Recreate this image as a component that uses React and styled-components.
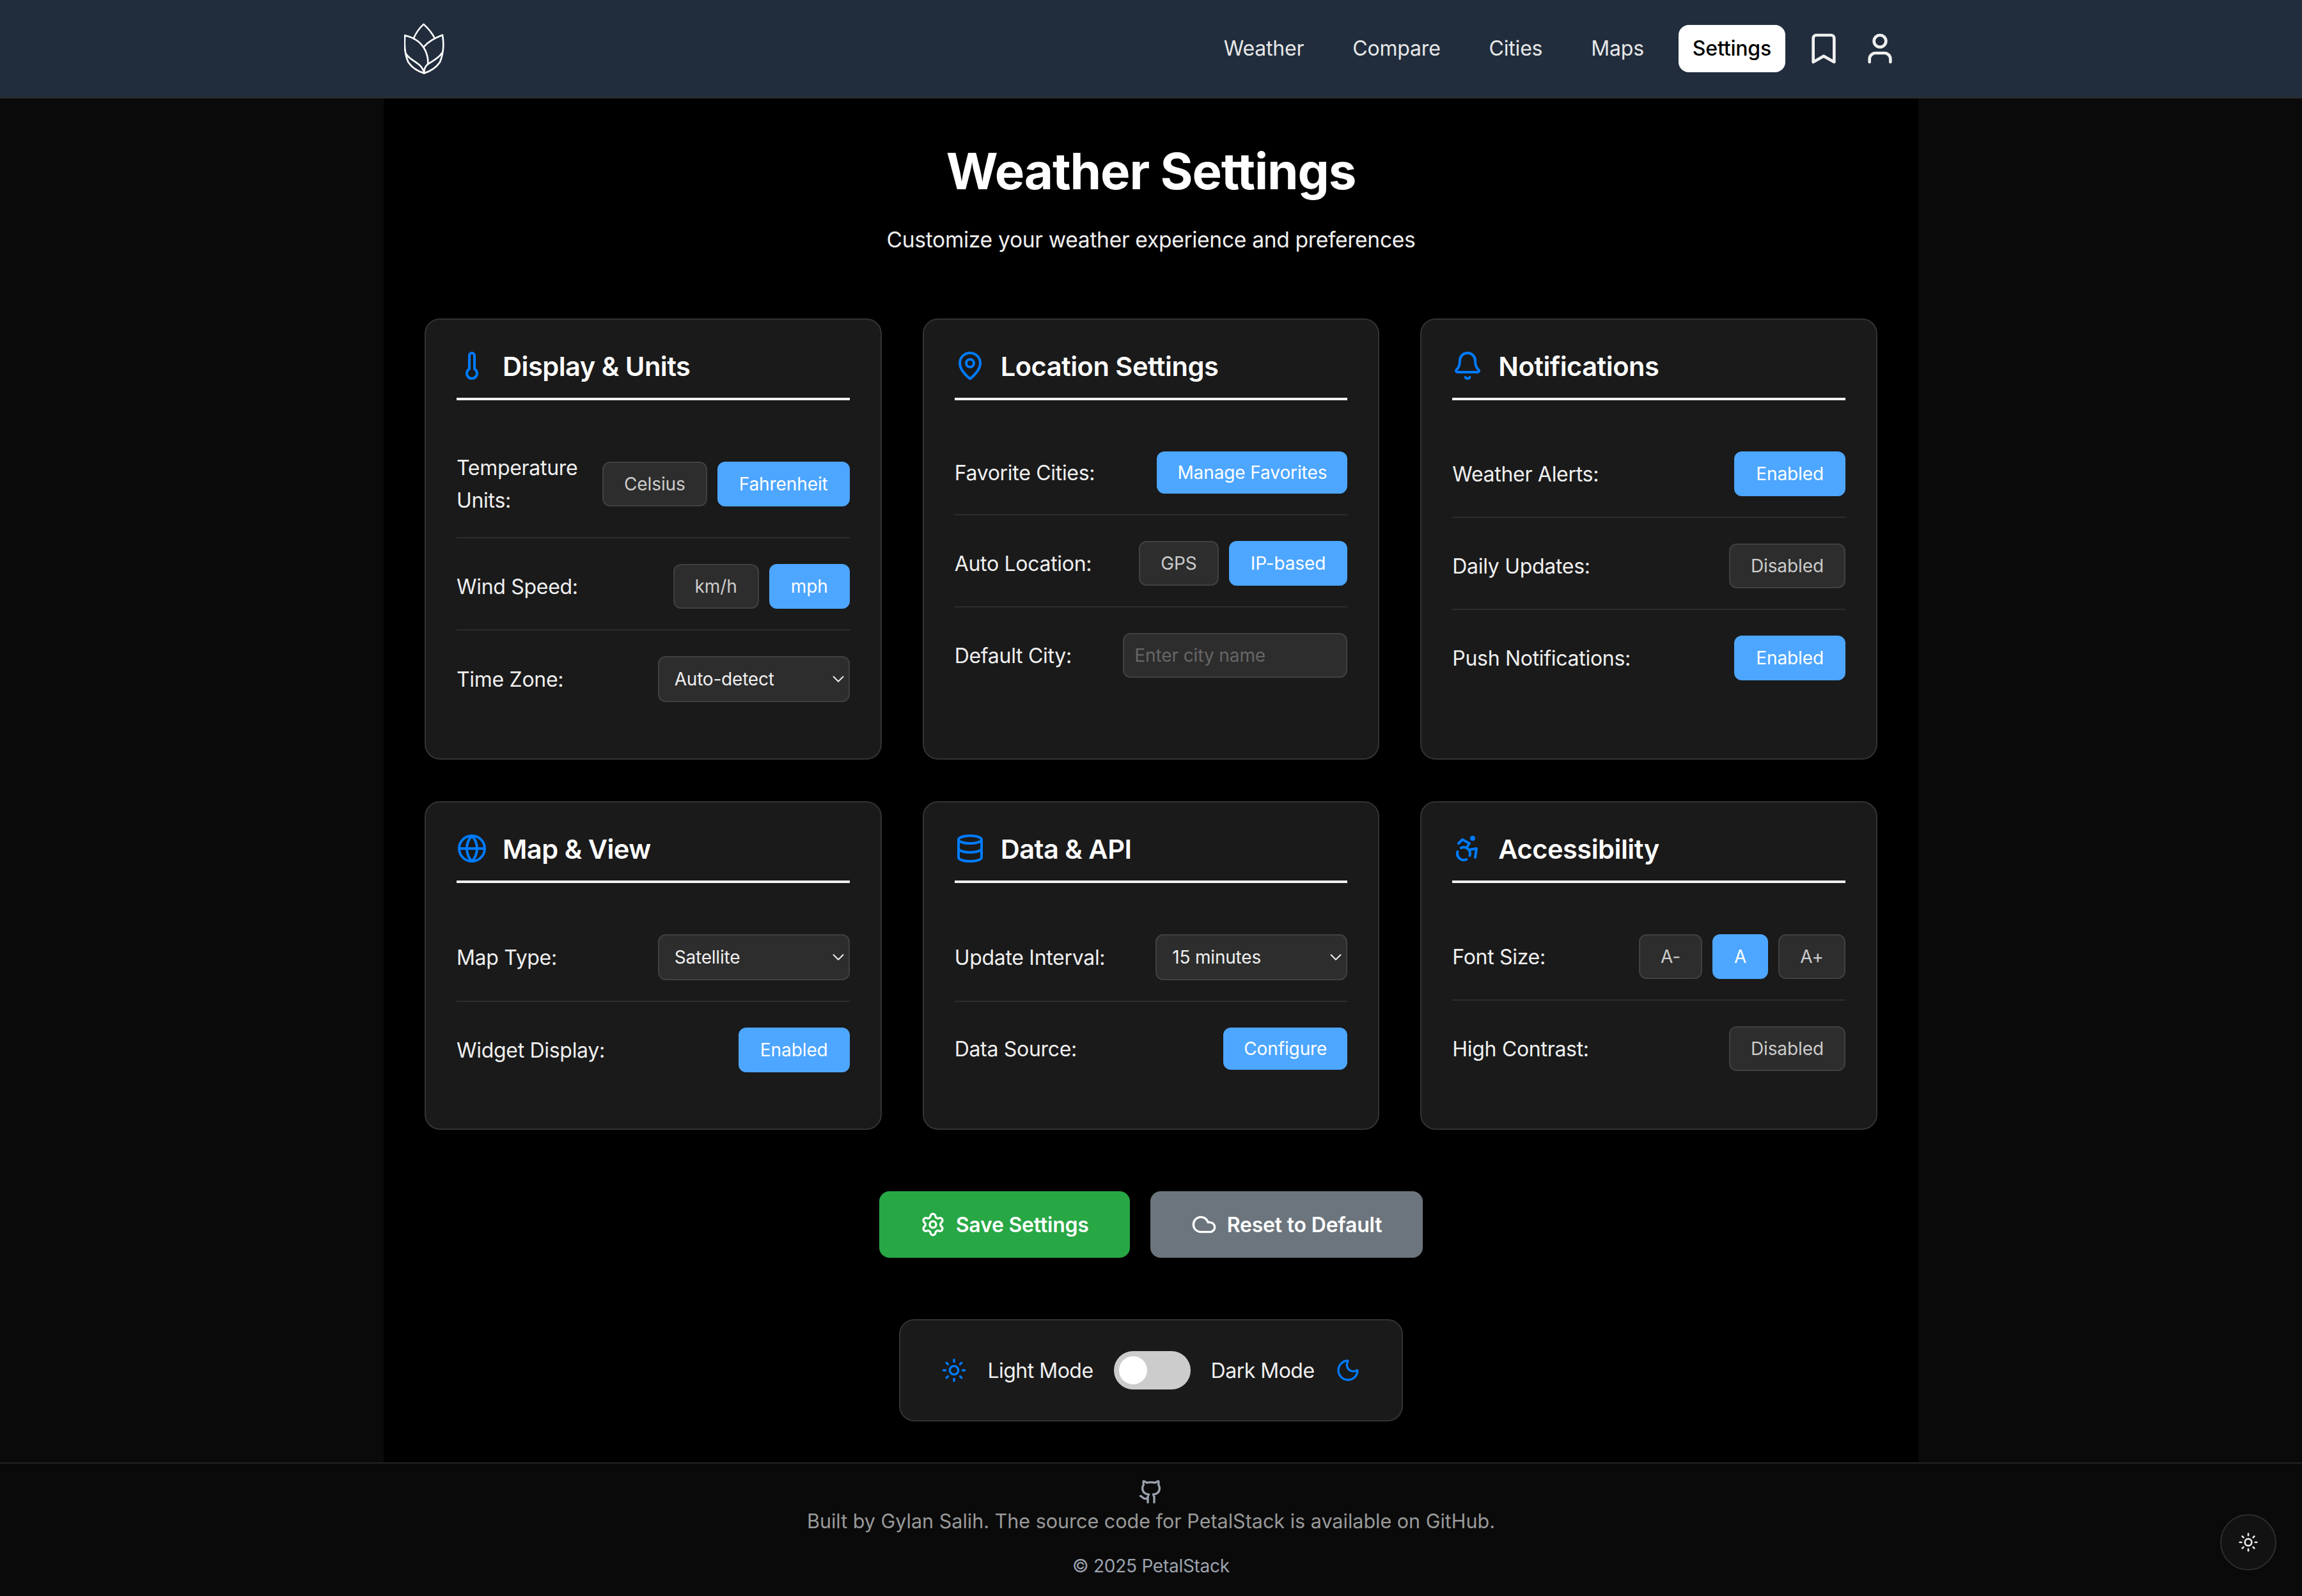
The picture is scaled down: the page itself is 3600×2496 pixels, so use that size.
import styled, { createGlobalStyle } from "styled-components";
import {
  Accessibility,
  Bell,
  Bookmark,
  ChevronDown,
  Cloud,
  Database,
  Github,
  Globe,
  MapPin,
  Moon,
  Settings,
  Sun,
  Thermometer,
  User,
} from "lucide-react";

const navLinks = ["Weather", "Compare", "Cities", "Maps", "Settings"];

function SelectField({ value, options }) {
  return (
    <SelectWrap>
      <Select defaultValue={value}>
        {options.map((option) => (
          <option key={option}>{option}</option>
        ))}
      </Select>
      <SelectArrow>
        <ChevronDown size={30} strokeWidth={1.5} />
      </SelectArrow>
    </SelectWrap>
  );
}

function Card({ icon: Icon, title, children }) {
  return (
    <CardBox>
      <CardHeader>
        <Icon size={48} strokeWidth={2} color="#007bff" />
        <CardTitle>{title}</CardTitle>
      </CardHeader>
      {children}
    </CardBox>
  );
}

function Logo() {
  return (
    <svg width="63" height="80" viewBox="96 107 190 240" fill="none" stroke="#fff" strokeWidth="8" strokeLinejoin="round" strokeLinecap="round">
      <path d="M140 180C152 152 168 130 188 112C210 132 228 154 240 178" />
      <path d="M100 165C145 175 178 198 196 236C206 258 210 280 208 300" />
      <path d="M100 165C97 200 97 250 115 290C135 320 165 335 190 343" />
      <path d="M104 250C120 285 182 292 190 343" />
      <path d="M190 218C212 192 245 175 277 163C285 210 282 250 265 290C245 320 215 335 190 343" />
      <path d="M190 343C190 325 195 310 208 300C232 286 262 270 274 248" />
    </svg>
  );
}

export default function App() {
  return (
    <>
      <GlobalStyle />
      <Nav>
        <NavInner>
          <Logo />
          <NavRight>
            {navLinks.map((link) => (
              <NavLink key={link} $active={link === "Settings"}>
                {link}
              </NavLink>
            ))}
            <Bookmark size={56} strokeWidth={2} color="#f0f0f0" />
            <User size={56} strokeWidth={2} color="#f0f0f0" />
          </NavRight>
        </NavInner>
      </Nav>

      <Main>
        <Title>Weather Settings</Title>
        <Subtitle>Customize your weather experience and preferences</Subtitle>

        <CardGrid>
          <Card icon={Thermometer} title="Display & Units">
            <Row>
              <Label>Temperature Units:</Label>
              <ButtonGroup>
                <OptionButton>Celsius</OptionButton>
                <OptionButton $variant="on">Fahrenheit</OptionButton>
              </ButtonGroup>
            </Row>
            <Row>
              <Label>Wind Speed:</Label>
              <ButtonGroup>
                <OptionButton>km/h</OptionButton>
                <OptionButton $variant="on">mph</OptionButton>
              </ButtonGroup>
            </Row>
            <Row>
              <Label>Time Zone:</Label>
              <SelectField value="Auto-detect" options={["Auto-detect", "UTC", "Local"]} />
            </Row>
          </Card>

          <Card icon={MapPin} title="Location Settings">
            <Row>
              <Label>Favorite Cities:</Label>
              <OptionButton $variant="action">Manage Favorites</OptionButton>
            </Row>
            <Row>
              <Label>Auto Location:</Label>
              <ButtonGroup>
                <OptionButton>GPS</OptionButton>
                <OptionButton $variant="on">IP-based</OptionButton>
              </ButtonGroup>
            </Row>
            <Row>
              <Label>Default City:</Label>
              <CityInput placeholder="Enter city name" />
            </Row>
          </Card>

          <Card icon={Bell} title="Notifications">
            <Row>
              <Label>Weather Alerts:</Label>
              <OptionButton $variant="on">Enabled</OptionButton>
            </Row>
            <Row>
              <Label>Daily Updates:</Label>
              <OptionButton>Disabled</OptionButton>
            </Row>
            <Row>
              <Label>Push Notifications:</Label>
              <OptionButton $variant="on">Enabled</OptionButton>
            </Row>
          </Card>

          <Card icon={Globe} title="Map & View">
            <Row>
              <Label>Map Type:</Label>
              <SelectField value="Satellite" options={["Standard", "Satellite", "Terrain"]} />
            </Row>
            <Row>
              <Label>Widget Display:</Label>
              <OptionButton $variant="on">Enabled</OptionButton>
            </Row>
          </Card>

          <Card icon={Database} title="Data & API">
            <Row>
              <Label>Update Interval:</Label>
              <SelectField value="15 minutes" options={["5 minutes", "15 minutes", "30 minutes"]} />
            </Row>
            <Row>
              <Label>Data Source:</Label>
              <OptionButton $variant="action">Configure</OptionButton>
            </Row>
          </Card>

          <Card icon={Accessibility} title="Accessibility">
            <Row>
              <Label>Font Size:</Label>
              <ButtonGroup>
                <OptionButton>A-</OptionButton>
                <OptionButton $variant="on">A</OptionButton>
                <OptionButton>A+</OptionButton>
              </ButtonGroup>
            </Row>
            <Row>
              <Label>High Contrast:</Label>
              <OptionButton>Disabled</OptionButton>
            </Row>
          </Card>
        </CardGrid>

        <Actions>
          <ActionButton $bg="#28a745">
            <Settings size={40} strokeWidth={2} />
            Save Settings
          </ActionButton>
          <ActionButton $bg="#6c757d">
            <Cloud size={40} strokeWidth={2} />
            Reset to Default
          </ActionButton>
        </Actions>

        <ThemeBox>
          <Sun size={40} strokeWidth={2} color="#007bff" />
          <ThemeLabel>Light Mode</ThemeLabel>
          <ToggleTrack>
            <ToggleKnob />
          </ToggleTrack>
          <ThemeLabel>Dark Mode</ThemeLabel>
          <Moon size={40} strokeWidth={2} color="#007bff" />
        </ThemeBox>
      </Main>

      <Footer>
        <Github size={40} strokeWidth={2} color="#9ca3af" />
        <FooterText>Built by Gylan Salih. The source code for PetalStack is available on GitHub.</FooterText>
        <Copyright>© 2025 PetalStack</Copyright>
      </Footer>

      <FloatingTheme>
        <Sun size={32} strokeWidth={2} color="#e8e8e8" />
      </FloatingTheme>
    </>
  );
}

const GlobalStyle = createGlobalStyle`
  * {
    box-sizing: border-box;
  }

  body {
    margin: 0;
    background: #0a0a0a;
    font-family: "Inter", "Liberation Sans", sans-serif;
    color: #f0f0f0;
  }
`;

const Nav = styled.nav`
  background: #212d3d;
  border-bottom: 2px solid #2d2d2d;
  height: 154px;
`;

const NavInner = styled.div`
  width: 2400px;
  height: 100%;
  margin: 0 auto;
  padding: 0 32px;
  display: flex;
  align-items: center;
  justify-content: space-between;
`;

const NavRight = styled.div`
  display: flex;
  align-items: center;
  gap: 32px;
`;

const NavLink = styled.a`
  font-size: 32px;
  line-height: 50px;
  letter-spacing: -0.2px;
  padding: 12px 22px;
  border-radius: 16px;
  color: ${(props) => (props.$active ? "#000000" : "#e8e8e8")};
  background: ${(props) => (props.$active ? "#ffffff" : "transparent")};
  font-weight: ${(props) => (props.$active ? 500 : 400)};
`;

const Main = styled.main`
  width: 2400px;
  margin: 0 auto;
  padding: 66px 64px 64px;
  background: #000000;
  display: flex;
  flex-direction: column;
  align-items: center;
`;

const Title = styled.h1`
  margin: 0;
  font-size: 78px;
  line-height: 96px;
  letter-spacing: -1.1px;
  font-weight: 700;
  color: #ffffff;
`;

const Subtitle = styled.p`
  margin: 31px 0 95px;
  font-size: 33.6px;
  line-height: 56px;
  letter-spacing: -0.31px;
  color: #f0f0f0;
`;

const CardGrid = styled.div`
  width: 100%;
  display: grid;
  grid-template-columns: repeat(3, 1fr);
  gap: 65px 64px;
`;

const CardBox = styled.section`
  background: #1a1a1a;
  border: 2px solid #333333;
  border-radius: 24px;
  padding: 48px;
`;

const CardHeader = styled.header`
  display: flex;
  align-items: center;
  gap: 24px;
  padding-bottom: 26px;
  border-bottom: 4px solid #f0f0f0;
  margin-bottom: 80px;
`;

const CardTitle = styled.h2`
  margin: 0;
  padding-top: 3px;
  font-size: 41.6px;
  line-height: 45px;
  letter-spacing: -0.5px;
  font-weight: 600;
  color: #ffffff;
`;

const Row = styled.div`
  display: flex;
  align-items: center;
  justify-content: space-between;
  gap: 32px;
  padding-bottom: 32px;
  border-bottom: 2px solid #2d2d2d;
  margin-bottom: 40px;

  &:last-child {
    padding-bottom: 0;
    border-bottom: none;
  }
`;

const Label = styled.span`
  font-size: 32px;
  line-height: 51px;
  letter-spacing: -0.3px;
  color: #f0f0f0;
`;

const ButtonGroup = styled.div`
  display: flex;
  gap: 16px;
  flex-shrink: 0;
`;

const OptionButton = styled.button`
  font-family: inherit;
  font-size: 28px;
  letter-spacing: -0.1px;
  padding: 16px 32px;
  border-radius: 12px;
  white-space: nowrap;
  flex-shrink: 0;
  border: ${(props) =>
    props.$variant === "action"
      ? "none"
      : props.$variant === "on"
        ? "2px solid #4da6ff"
        : "2px solid #404040"};
  background: ${(props) => (props.$variant ? "#4da6ff" : "#2d2d2d")};
  color: ${(props) => (props.$variant ? "#ffffff" : "#cccccc")};
`;

const SelectWrap = styled.div`
  position: relative;
  flex-shrink: 0;
  width: 300px;
  height: 72px;
`;

const Select = styled.select`
  appearance: none;
  width: 100%;
  height: 100%;
  padding: 0 24px;
  background: #2d2d2d;
  border: 2px solid #404040;
  border-radius: 12px;
  color: #f0f0f0;
  font-family: inherit;
  font-size: 28px;
  letter-spacing: -0.2px;
`;

const SelectArrow = styled.span`
  position: absolute;
  top: 21px;
  right: 3px;
  display: flex;
  color: #f0f0f0;
  pointer-events: none;
`;

const CityInput = styled.input`
  flex-shrink: 0;
  width: 351px;
  height: 70px;
  padding: 0 16px;
  background: #2d2d2d;
  border: 2px solid #404040;
  border-radius: 12px;
  color: #f0f0f0;
  font-family: inherit;
  font-size: 28px;
  letter-spacing: -0.1px;

  &::placeholder {
    color: #666666;
    opacity: 1;
  }
`;

const Actions = styled.div`
  display: flex;
  gap: 32px;
  margin-top: 96px;
`;

const ActionButton = styled.button`
  display: flex;
  align-items: center;
  gap: 16px;
  height: 104px;
  padding: 0 64px;
  border: none;
  border-radius: 16px;
  background: ${(props) => props.$bg};
  color: #ffffff;
  font-family: inherit;
  font-size: 32px;
  letter-spacing: -0.2px;
  font-weight: 600;
`;

const ThemeBox = styled.div`
  display: flex;
  align-items: center;
  gap: 32px;
  margin-top: 96px;
  padding: 48px 64px;
  background: #1a1a1a;
  border: 2px solid #333333;
  border-radius: 24px;
`;

const ThemeLabel = styled.span`
  font-size: 32px;
  letter-spacing: -0.5px;
  color: #f0f0f0;
`;

const ToggleTrack = styled.div`
  width: 120px;
  height: 60px;
  padding: 8px;
  border-radius: 30px;
  background: #cccccc;
`;

const ToggleKnob = styled.div`
  width: 44px;
  height: 44px;
  border-radius: 50%;
  background: #ffffff;
`;

const Footer = styled.footer`
  height: 209px;
  padding-top: 24px;
  background: #0a0a0a;
  border-top: 2px solid #222222;
  display: flex;
  flex-direction: column;
  align-items: center;
`;

const FooterText = styled.p`
  margin: 0;
  font-size: 30.5px;
  line-height: 51px;
  color: #999999;
`;

const Copyright = styled.p`
  margin: 23px 0 0;
  font-size: 28px;
  line-height: 45px;
  letter-spacing: -0.27px;
  color: #9ca3af;
`;

const FloatingTheme = styled.button`
  position: fixed;
  right: 40px;
  bottom: 40px;
  width: 88px;
  height: 88px;
  display: flex;
  align-items: center;
  justify-content: center;
  border-radius: 50%;
  background: #121212;
  border: 2px solid #2d2d2d;
`;
